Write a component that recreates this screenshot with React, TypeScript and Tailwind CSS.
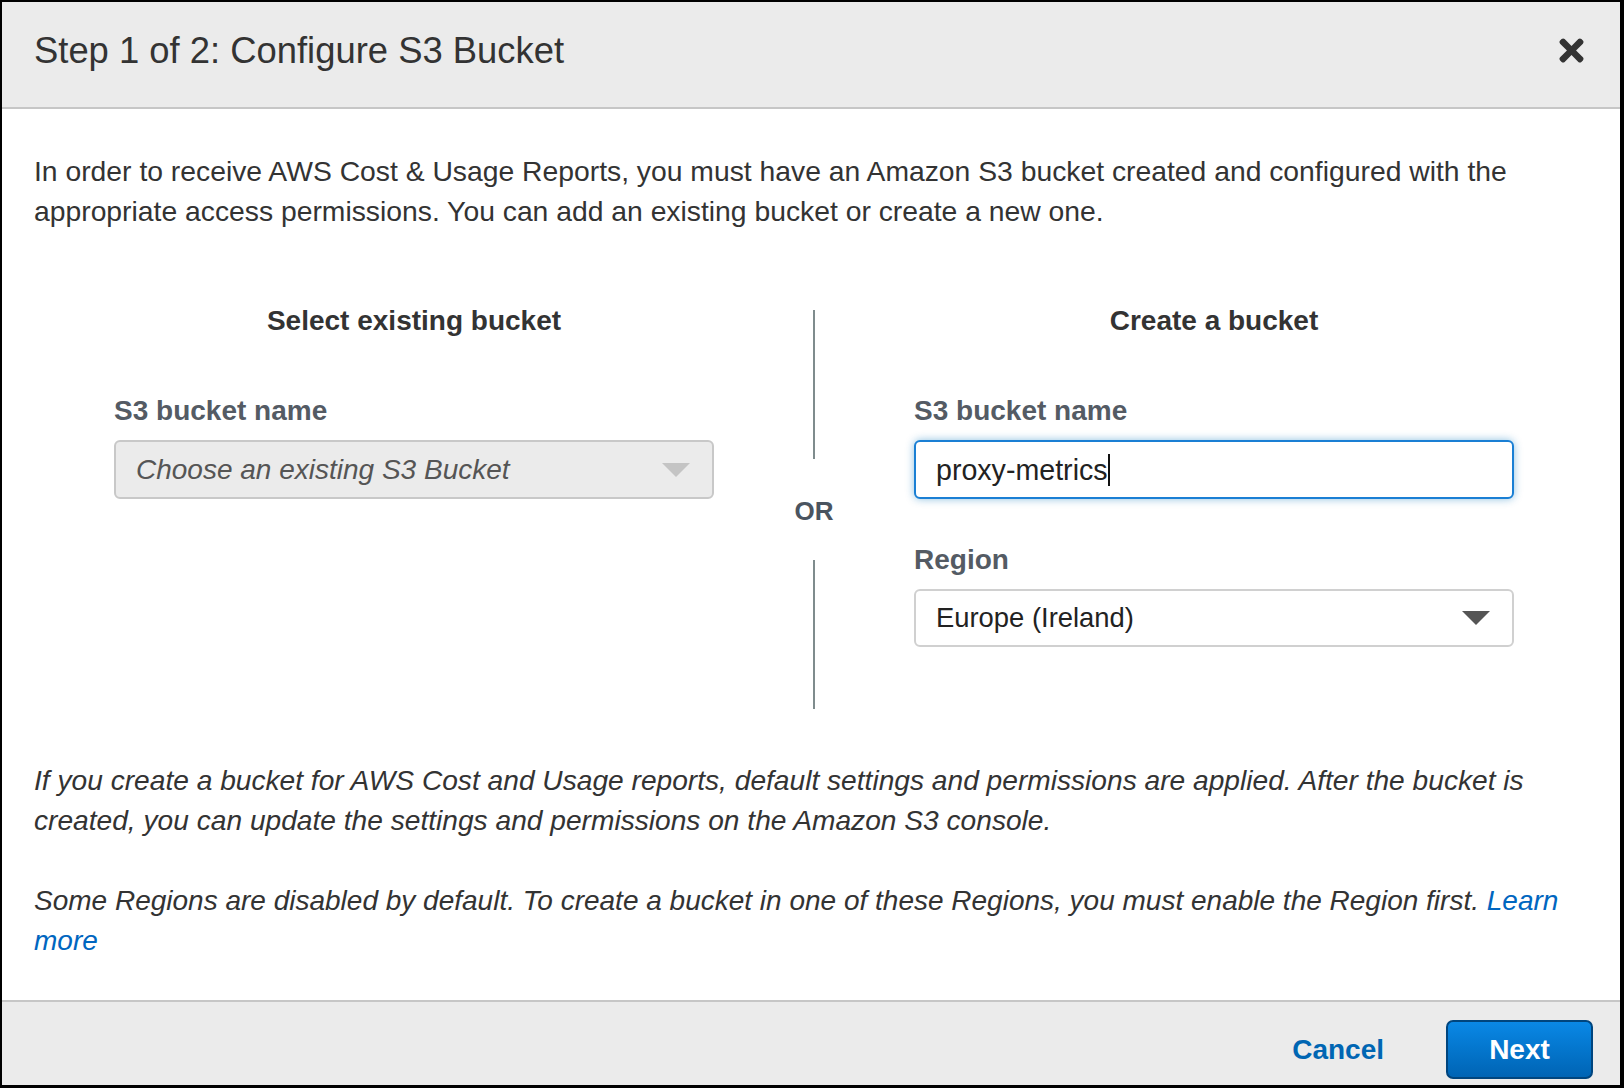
import React from "react";
import { FaTimes } from "react-icons/fa";

function Caret({ color }: { color: string }) {
  return (
    <svg width="28" height="14" viewBox="0 0 28 14" className="shrink-0">
      <path d="M0 0 L28 0 L14 14 Z" fill={color} />
    </svg>
  );
}

export default function App() {
  return (
    <div
      className="w-[1624px] h-[1088px] bg-black overflow-hidden"
      style={{ fontFamily: '"Liberation Sans", Arial, sans-serif' }}
    >
      <div className="ml-[2px] mt-[2px] w-[1618px] h-[1083px] bg-white flex flex-col">
        {/* Header */}
        <div className="h-[107px] shrink-0 bg-[#ebebeb] border-b-2 border-[#c6c6c6] flex items-start justify-between pl-[32px] pr-[31px] pt-[29px]">
          <h1 className="text-[36.4px] leading-[40px] text-[#333333]">Step 1 of 2: Configure S3 Bucket</h1>
          <FaTimes className="text-[#333333] w-[35px] h-[35px] mt-[2px]" />
        </div>

        {/* Body */}
        <div className="flex-1 px-[32px] pt-[42px] text-[28.3px] leading-[40px] text-[#333333]">
          <p>
            In order to receive AWS Cost &amp; Usage Reports, you must have an Amazon S3 bucket created and configured with the
            appropriate access permissions. You can add an existing bucket or create a new one.
          </p>

          <div className="mt-[74px] pl-[80px] grid grid-cols-[600px_200px_600px] text-[28px]">
            {/* Left column */}
            <div className="flex flex-col">
              <div className="text-center font-bold leading-[32px] text-[#333333]">Select existing bucket</div>
              <div className="mt-[58px] font-bold leading-[32px] text-[#545b64]">S3 bucket name</div>
              <div className="mt-[13px] h-[59px] rounded-[6px] border-2 border-[#c8c8c8] bg-[#ebebeb] flex items-center justify-between pl-[20px] pr-[22px]">
                <span className="italic text-[#555555]">Choose an existing S3 Bucket</span>
                <Caret color="#c4c4c4" />
              </div>
            </div>

            {/* Middle column */}
            <div className="flex flex-col items-center pt-[5px]">
              <div className="w-[2px] h-[149px] bg-[#7f8c8d]" />
              <div className="mt-[38px] font-bold text-[26px] leading-[28px] text-[#4a5460]">OR</div>
              <div className="mt-[35px] w-[2px] h-[149px] bg-[#7f8c8d]" />
            </div>

            {/* Right column */}
            <div className="flex flex-col">
              <div className="text-center font-bold leading-[32px] text-[#333333]">Create a bucket</div>
              <div className="mt-[58px] font-bold leading-[32px] text-[#545b64]">S3 bucket name</div>
              <div className="mt-[13px] h-[59px] rounded-[6px] border-2 border-[#1a7fd4] bg-white flex items-center pl-[20px] shadow-[0_0_8px_rgba(0,115,187,0.45)]">
                <span className="text-[28.6px] text-[#222222]">proxy-metrics</span>
                <span className="w-[2px] h-[32px] bg-[#111111]" />
              </div>
              <div className="mt-[45px] font-bold leading-[32px] text-[#545b64]">Region</div>
              <div className="mt-[13px] h-[58px] rounded-[6px] border-2 border-[#d0d0d0] bg-white flex items-center justify-between pl-[20px] pr-[22px]">
                <span className="text-[27.4px] text-[#222222]">Europe (Ireland)</span>
                <Caret color="#555555" />
              </div>
            </div>
          </div>

          <p className="mt-[52px] italic text-[28.15px]">
            If you create a bucket for AWS Cost and Usage reports, default settings and permissions are applied. After the bucket is
            created, you can update the settings and permissions on the Amazon S3 console.
          </p>
          <p className="mt-[40px] italic text-[28px]">
            Some Regions are disabled by default. To create a bucket in one of these Regions, you must enable the Region first.{" "}
            <span className="text-[#0066c0]">Learn more</span>
          </p>
        </div>

        {/* Footer */}
        <div className="h-[85px] shrink-0 bg-[#ebebeb] border-t-2 border-[#c6c6c6] flex items-start justify-end pr-[27px] pt-[18px]">
          <button className="mt-[12px] mr-[62px] font-bold text-[28px] leading-[36px] text-[#0066b3]">Cancel</button>
          <button className="w-[147px] h-[59px] rounded-[7px] border-2 border-[#00457e] bg-gradient-to-b from-[#0a88e6] to-[#0064b4] text-white font-bold text-[28px] leading-[36px]">
            Next
          </button>
        </div>
      </div>
    </div>
  );
}
